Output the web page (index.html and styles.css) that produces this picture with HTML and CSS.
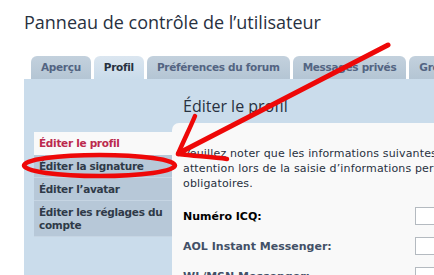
FILE: index.html
```html
<!DOCTYPE html>
<html lang="fr">
<head>
<meta charset="utf-8">
<title>Panneau de contrôle de l’utilisateur</title>
<link rel="stylesheet" href="styles.css">
</head>
<body>
<div class="page">
  <h1 class="title">Panneau de contrôle de l’utilisateur</h1>
  <ul class="tabs">
    <li class="tab">Aperçu</li>
    <li class="tab active">Profil</li>
    <li class="tab">Préférences du forum</li>
    <li class="tab">Messages privés</li>
    <li class="tab">Groupes d’utilisateurs</li>
  </ul>
  <div class="panel">
    <h2 class="heading">Éditer le profil</h2>
    <ul class="menu">
      <li class="item current">Éditer le profil</li>
      <li class="item">Éditer la signature</li>
      <li class="item">Éditer l’avatar</li>
      <li class="item">Éditer les réglages du compte</li>
    </ul>
    <div class="content">
      <p class="intro">Veuillez noter que les informations suivantes seront visibles publiquement. Faites<br>attention lors de la saisie d’informations personnelles. Les champs marqués d’un * sont<br>obligatoires.</p>
      <div class="field"><label class="label dark">Numéro ICQ:</label><span class="input"></span></div>
      <div class="field"><label class="label">AOL Instant Messenger:</label><span class="input"></span></div>
      <div class="field"><label class="label">WL/MSN Messenger:</label><span class="input"></span></div>
    </div>
  </div>
</div>
<svg class="marks" width="434" height="275" viewBox="0 0 434 275">
  <g fill="none" stroke="#ee0808" stroke-linecap="round" stroke-linejoin="round">
    <path d="M388 45 C 320 80, 250 116, 179 153" stroke-width="5"/>
    <path d="M195 116 C 190 128, 184 140, 178 154" stroke-width="4.5"/>
    <path d="M178 154 C 195 156, 212 157, 227 159" stroke-width="4.5"/>
    <ellipse cx="99.5" cy="165.5" rx="75.5" ry="10.5" stroke-width="4.5"/>
  </g>
</svg>
</body>
</html>
```

FILE: styles.css
```css
html, body {
  margin: 0;
  padding: 0;
  background: #ffffff;
  overflow: hidden;
}
body {
  width: 434px;
  height: 275px;
  position: relative;
}
.page {
  padding-left: 24px;
  height: 275px;
  display: flex;
  flex-direction: column;
}
.title {
  margin: 0;
  padding-top: 10px;
  height: 56px;
  flex: none;
  box-sizing: border-box;
  font-family: "Open Sans", sans-serif;
  font-weight: 400;
  font-size: 18px;
  line-height: 24px;
  color: #28313f;
  white-space: nowrap;
}
.tabs {
  list-style: none;
  margin: 0 0 0 7px;
  padding: 0;
  display: flex;
  gap: 3px;
  height: 23px;
  flex: none;
  white-space: nowrap;
}
.tab {
  flex: none;
  height: 23px;
  line-height: 23px;
  padding: 0 10px;
  border-radius: 6px 6px 0 0;
  background: linear-gradient(#c3d1dd, #b4c5d4);
  font-family: "DejaVu Sans", Verdana, sans-serif;
  font-weight: bold;
  font-size: 10.5px;
  letter-spacing: -0.3px;
  color: #536482;
}
.tab.active {
  background: linear-gradient(#dbe6f0, #cadceb);
  color: #28313f;
}
.panel {
  flex: 1;
  background: #cadceb;
  display: grid;
  grid-template-columns: 138px 400px;
  grid-template-rows: auto 1fr;
  padding-left: 10px;
  overflow: hidden;
}
.heading {
  grid-column: 2;
  grid-row: 1;
  margin: 0;
  padding: 17px 0 0 11px;
  height: 44px;
  box-sizing: border-box;
  font-family: "Open Sans", sans-serif;
  font-weight: 400;
  font-size: 16px;
  line-height: 20px;
  color: #28313f;
  white-space: nowrap;
}
.menu {
  grid-column: 1;
  grid-row: 2;
  list-style: none;
  margin: 9px 0 0 0;
  padding: 0;
  align-self: start;
}
.item {
  padding: 5px 5px 4px 5px;
  line-height: 13px;
  border-bottom: 1px solid #c6d5e3;
  background: #b7c8d8;
  font-family: "DejaVu Sans", Verdana, sans-serif;
  font-weight: bold;
  font-size: 10.5px;
  letter-spacing: -0.3px;
  color: #2f3a48;
}
.item.current {
  background: #f9f9f9;
  color: #bc2a4d;
  border-bottom-color: #f9f9f9;
}
.content {
  grid-column: 2;
  grid-row: 2;
  background: #f9f9f9;
  border-top-left-radius: 7px;
  padding: 23px 0 0 11px;
}
.intro {
  margin: 0 0 10px 0;
  font-family: "DejaVu Sans", Verdana, sans-serif;
  font-size: 11px;
  line-height: 15px;
  letter-spacing: 0.15px;
  color: #28313f;
  white-space: nowrap;
}
.field {
  display: grid;
  grid-template-columns: 232px 100px;
  align-items: center;
  height: 30px;
}
.label {
  font-family: "DejaVu Sans", Verdana, sans-serif;
  font-weight: bold;
  font-size: 11px;
  color: #425067;
  white-space: nowrap;
}
.label.dark {
  color: #000000;
}
.input {
  display: block;
  height: 18px;
  box-sizing: border-box;
  border: 1px solid #b4bac0;
  background: #ffffff;
}
.marks {
  position: absolute;
  left: 0;
  top: 0;
  pointer-events: none;
}
```
